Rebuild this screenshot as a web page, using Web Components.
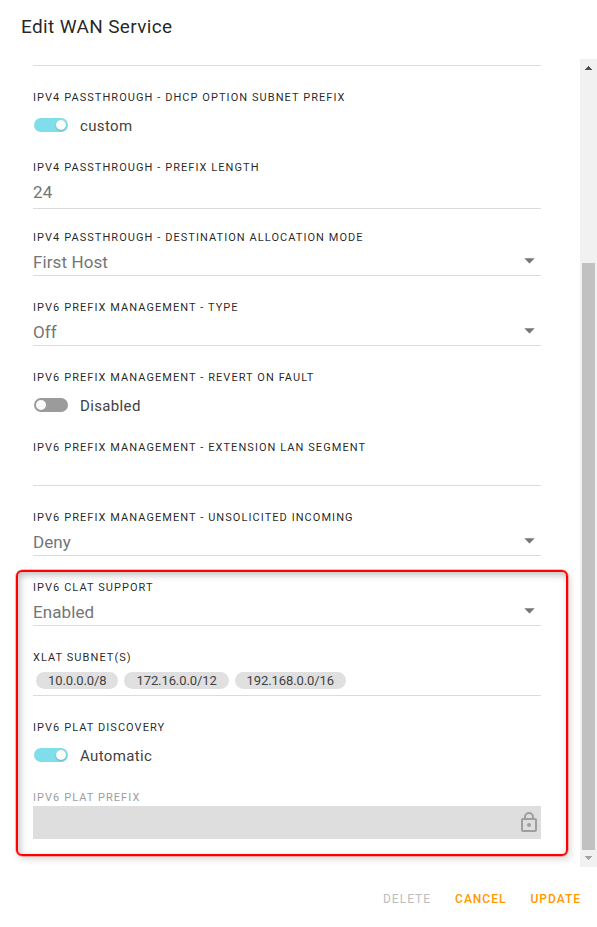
<!DOCTYPE html>
<html lang="en">
<head>
<meta charset="utf-8">
<title>Edit WAN Service</title>
<style>
  html, body { height: 100%; }
  body {
    margin: 0;
    overflow: hidden;
    background: #fff;
    color: rgba(0, 0, 0, .87);
    font-family: Roboto, "Liberation Sans", sans-serif;
  }
</style>
</head>
<body>
<wan-dialog heading="Edit WAN Service">
  <wan-field></wan-field>
  <wan-field label="IPv4 Passthrough - DHCP Option Subnet Prefix" plain>
    <wan-toggle checked>custom</wan-toggle>
  </wan-field>
  <wan-field label="IPv4 Passthrough - Prefix Length" tall>24</wan-field>
  <wan-field label="IPv4 Passthrough - Destination Allocation Mode" select>First Host</wan-field>
  <wan-field label="IPv6 Prefix Management - Type" select>Off</wan-field>
  <wan-field label="IPv6 Prefix Management - Revert on Fault" plain>
    <wan-toggle>Disabled</wan-toggle>
  </wan-field>
  <wan-field label="IPv6 Prefix Management - Extension LAN Segment"></wan-field>
  <wan-field label="IPv6 Prefix Management - Unsolicited Incoming" select>Deny</wan-field>
  <wan-callout>
    <wan-field label="IPv6 CLAT Support" select>Enabled</wan-field>
    <wan-field label="XLAT Subnet(s)" chips>
      <wan-chip>10.0.0.0/8</wan-chip><wan-chip>172.16.0.0/12</wan-chip><wan-chip>192.168.0.0/16</wan-chip>
    </wan-field>
    <wan-field label="IPv6 PLAT Discovery" plain>
      <wan-toggle checked>Automatic</wan-toggle>
    </wan-field>
    <wan-field label="IPv6 PLAT Prefix" locked></wan-field>
  </wan-callout>
  <wan-button slot="actions" disabled>Delete</wan-button>
  <wan-button slot="actions">Cancel</wan-button>
  <wan-button slot="actions">Update</wan-button>
</wan-dialog>

<script>
/** Small base class: every component renders its template once. */
class WanElement extends HTMLElement {
  connectedCallback() {
    if (this.shadowRoot) return;
    this.attachShadow({ mode: "open" }).innerHTML = this.template();
  }
}

class WanDialog extends WanElement {
  template() {
    return `
      <style>
        :host {
          display: grid;
          grid-template-rows: 59px 808px 60px;
          height: 927px;
        }
        h1 {
          margin: 0;
          padding: 13px 0 0 21px;
          font-size: 19px;
          line-height: 27px;
          font-weight: 400;
          letter-spacing: .35px;
        }
        .body {
          display: grid;
          grid-template-columns: 1fr 17px;
          min-height: 0;
        }
        /* The list is scrolled, its first field is cut off at the top */
        .fields {
          display: flex;
          flex-direction: column;
          justify-content: flex-end;
          overflow: hidden;
          padding: 0 39px 9px 33px;
        }
        footer {
          display: flex;
          justify-content: flex-end;
          align-items: center;
          gap: 24px;
          padding: 3px 16px 0 0;
        }
      </style>
      <h1>${this.getAttribute("heading")}</h1>
      <div class="body">
        <div class="fields"><slot></slot></div>
        <wan-scrollbar></wan-scrollbar>
      </div>
      <footer><slot name="actions"></slot></footer>
    `;
  }
}

class WanScrollbar extends WanElement {
  template() {
    return `
      <style>
        :host {
          display: flex;
          flex-direction: column;
          background: #f1f1f1;
        }
        svg { display: block; flex: none; }
        .track { flex: 1; padding: 187px 2px 0; display: flex; }
        .thumb { flex: 1; background: #c1c1c1; }
      </style>
      <svg width="17" height="17" shape-rendering="crispEdges"><path d="M8 7h1v1h1v1h1v1h1v1H5v-1h1V9h1V8h1z" fill="#505050"/></svg>
      <div class="track"><div class="thumb"></div></div>
      <svg width="17" height="17" shape-rendering="crispEdges"><path d="M5 6h7v1h-1v1h-1v1H9v1H8V9H7V8H6V7H5z" fill="#a3a3a3"/></svg>
    `;
  }
}

/**
 * Labelled form row.
 * Flags: select (arrow), plain (no underline), tall (number input), chips, locked
 */
class WanField extends WanElement {
  template() {
    const arrow = `<svg width="11" height="6" viewBox="0 0 11 6"><path d="M.3 .3h10.4L5.5 5.5z" fill="#757575"/></svg>`;
    const lock = `
      <svg class="lock" width="18" height="23" viewBox="0 0 18 23" fill="none" stroke="#9e9e9e" stroke-width="2">
        <rect x="2" y="8" width="14" height="12" rx="1"/>
        <path d="M5 8V6a4 4 0 0 1 8 0V8"/>
        <circle cx="9" cy="14" r="2" fill="#9e9e9e" stroke="none"/>
      </svg>`;
    return `
      <style>
        :host {
          display: block;
          flex: none;
          height: 70px;
        }
        label {
          display: block;
          box-sizing: border-box;
          height: 18px;
          padding-top: 1px;
          font-size: 11px;
          line-height: 18px;
          letter-spacing: 1.06px;
          text-transform: uppercase;
          white-space: nowrap;
        }
        .control {
          display: flex;
          align-items: center;
          box-sizing: border-box;
          height: 30px;
          padding-top: 1px;
          border-bottom: 1px solid #dcdcdc;
          color: #757575;
          font-size: 17px;
          letter-spacing: .1px;
        }
        .value { display: flex; flex: 1; padding-top: 2px; }
        svg { display: block; margin-right: 6px; }
        :host([tall]) .control { height: 33px; padding-bottom: 3px; }
        :host([plain]) .control { border-color: transparent; padding: 0; }
        :host([plain]) .value { padding: 0; }
        :host([chips]) .value { padding: 0 0 1px; }
        :host([locked]) label { color: #9e9e9e; }
        :host([locked]) .control {
          height: 33px;
          background: #dedede;
          border: 0;
          padding: 0;
        }
        .lock { margin-right: 3px; }
      </style>
      <label>${this.getAttribute("label") || ""}</label>
      <div class="control">
        <div class="value"><slot></slot></div>
        ${this.hasAttribute("select") ? arrow : ""}
        ${this.hasAttribute("locked") ? lock : ""}
      </div>
    `;
  }
}

class WanToggle extends WanElement {
  template() {
    return `
      <style>
        :host {
          display: flex;
          align-items: center;
          gap: 12px;
          color: #424242;
          font-size: 15px;
          line-height: 20px;
          letter-spacing: .36px;
          padding: 10px 0 0 1px;
        }
        .track {
          display: flex;
          box-sizing: border-box;
          width: 34px;
          height: 14px;
          margin-top: -2px;
          padding: 2px;
          border-radius: 7px;
          background: #9b9b9b;
        }
        .knob {
          width: 10px;
          height: 10px;
          border-radius: 50%;
          background: #fafafa;
        }
        :host([checked]) .track { justify-content: flex-end; background: #80deea; }
        :host([checked]) .knob { box-shadow: 0 1px 2px rgba(0, 0, 0, .2); }
      </style>
      <span class="track"><span class="knob"></span></span>
      <slot></slot>
    `;
  }
}

class WanChip extends WanElement {
  template() {
    return `
      <style>
        :host {
          display: block;
          margin: 0 3px;
          padding: 0 12px;
          border-radius: 9px;
          background: #e0e0e0;
          color: #424242;
          font-size: 13px;
          line-height: 17px;
          letter-spacing: -.1px;
        }
      </style>
      <slot></slot>
    `;
  }
}

/** Wraps a group of fields and draws a red frame around it */
class WanCallout extends WanElement {
  template() {
    return `
      <style>
        :host {
          display: block;
          flex: none;
          position: relative;
        }
        .frame {
          position: absolute;
          inset: -8px -27px 2px -17px;
          border: 2px solid #f00;
          border-radius: 6px;
          box-shadow: 0 0 0 .5px rgba(255, 0, 0, .5), 2px 3px 7px rgba(0, 0, 0, .16), inset 2px 3px 7px rgba(0, 0, 0, .25);
          pointer-events: none;
        }
      </style>
      <slot></slot>
      <div class="frame"></div>
    `;
  }
}

class WanButton extends WanElement {
  template() {
    return `
      <style>
        :host {
          display: block;
          color: #ff9800;
          font-size: 12px;
          line-height: 20px;
          font-weight: 500;
          letter-spacing: 1px;
          text-transform: uppercase;
        }
        :host([disabled]) { color: #bdbdbd; font-weight: 400; }
      </style>
      <slot></slot>
    `;
  }
}

customElements.define("wan-dialog", WanDialog);
customElements.define("wan-scrollbar", WanScrollbar);
customElements.define("wan-field", WanField);
customElements.define("wan-toggle", WanToggle);
customElements.define("wan-chip", WanChip);
customElements.define("wan-callout", WanCallout);
customElements.define("wan-button", WanButton);
</script>
</body>
</html>
